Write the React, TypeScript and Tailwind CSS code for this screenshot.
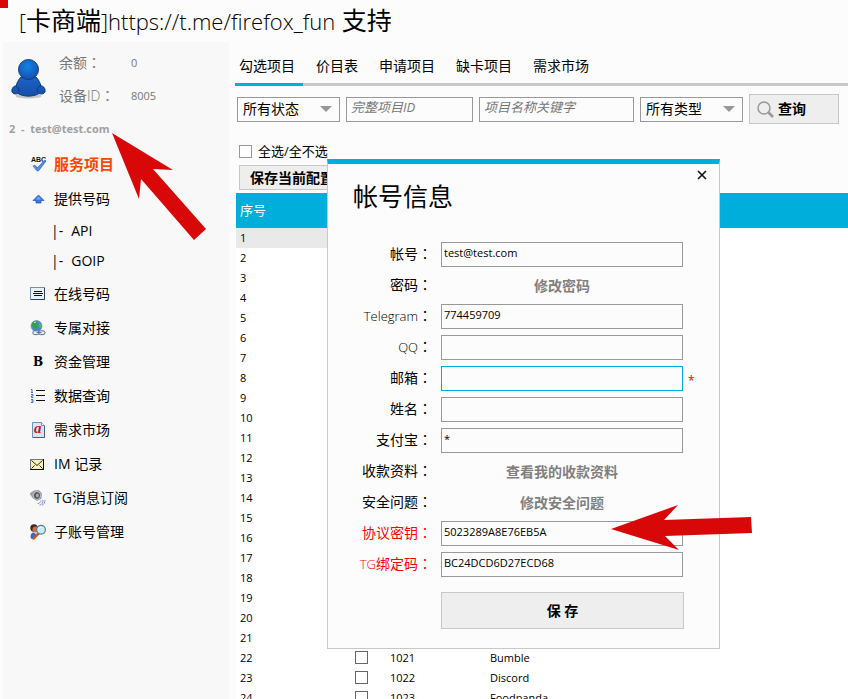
import React, { useState } from "react";
import clsx from "clsx";

interface MenuEntry {
  label: string;
  icon: React.ReactNode;
  children?: string[];
}

interface Field {
  id: string;
  label: string;
  value?: string;
  link?: string;
  required?: boolean;
  danger?: boolean;
}

const SpellIcon = () => (
  <svg width="18" height="16" viewBox="0 0 18 16" className="-mr-0.5 overflow-visible" aria-hidden="true">
    <text x="1" y="5" fontSize="7" fontFamily="Liberation Sans, sans-serif" fill="#111">ABC</text>
    <path d="M3 9l2-.8 2.500 2.600L14 3.500l2 .7L8.500 14H7Z" fill="#5a8ade" stroke="#3562b8" strokeWidth=".6" />
  </svg>
);

const UpIcon = () => (
  <svg width="16" height="16" viewBox="0 0 16 16" aria-hidden="true">
    <path d="M8.500 4 14 9.500h-3V12H6V9.500H3Z" fill="#3f78e0" stroke="#2a5cc4" strokeWidth=".8" />
    <path d="M8.500 5.500 11 8.500H6Z" fill="#7aa8f4" />
  </svg>
);

const NoteIcon = () => (
  <svg width="16" height="16" viewBox="0 0 16 16" aria-hidden="true">
    <rect x=".5" y="1.500" width="14" height="12" fill="#e9f0fa" stroke="#7890b0" />
    <path d="M1 13.500h13.500V2" fill="none" stroke="#2b4468" />
    <path d="M4 5.500h8M3 7.500h10M4 9.500h8" stroke="#111" />
  </svg>
);

const GlobeIcon = () => (
  <svg width="16" height="16" viewBox="0 0 16 16" aria-hidden="true">
    <circle cx="6.500" cy="6" r="5.500" fill="#4a86d8" stroke="#6c8fb8" strokeWidth=".7" />
    <path d="M2 3c2-2 4-2 5-1.500L6 4l2 1-1 3-2 2-1-3-2-1Z" fill="#35a53a" />
    <path d="m9 2 2 2v4L9 7Z" fill="#4fbe48" />
    <path d="M4 2.500 6 2" stroke="#c4efb0" />
    <rect x="2.800" y="10.800" width="6.500" height="3.800" rx="1.900" fill="#e8eef6" stroke="#56708f" />
    <rect x="8.500" y="10.800" width="6.500" height="3.800" rx="1.900" fill="#e8eef6" stroke="#56708f" />
    <path d="M6.500 12.600h5" stroke="#56708f" />
  </svg>
);

const BoldIcon = () => (
  <span className="block w-4 text-center font-['DejaVu_Serif',serif] text-xs font-bold">B</span>
);

const ListIcon = () => (
  <svg width="16" height="16" viewBox="0 0 16 16" aria-hidden="true">
    <path d="M1 1.500h1V5M1 4.500h2M1 6.500h2V8H1.500v1.500h2M1 11.500h2v3H1M1.500 13h1.500" fill="none" stroke="#4a6fc0" />
    <path d="M6 2.500h9M6 7.500h9M6 12.500h9" stroke="#111" />
  </svg>
);

const LetterIcon = () => (
  <svg width="16" height="16" viewBox="0 0 16 16" aria-hidden="true">
    <path d="M2.500.5h9l3 3v12h-12Z" fill="#d7e6fa" stroke="#6f8fc0" />
    <path d="M11.500.5v3h3" fill="#fff" stroke="#6f8fc0" />
    <path d="M3 15.500h11.500V4" fill="none" stroke="#3d5f96" />
    <text x="4" y="11" fontSize="15" fontStyle="italic" fontWeight="700" fontFamily="Liberation Serif, serif" fill="#c8141c">a</text>
  </svg>
);

const MailIcon = () => (
  <svg width="16" height="16" viewBox="0 0 16 16" aria-hidden="true">
    <rect x=".5" y="3.500" width="13" height="10" fill="#f3f0b8" stroke="#777" />
    <path d="M0 13.500h14M13.500 3v10.500" stroke="#111" />
    <path d="m1.500 4.500 5.500 5 5.500-5M1.500 12.500l3-3M12.500 12.500l-3-3" fill="none" stroke="#222" />
  </svg>
);

const SpeakerIcon = () => (
  <svg width="16" height="16" viewBox="0 0 16 16" aria-hidden="true">
    <path d="M0 3.500 4 1l5-.5 2.500 3-.5 5L7 10.500 3 8Z" fill="#a4a7ad" stroke="#777b82" strokeWidth=".6" />
    <ellipse cx="7" cy="5.500" rx="3.600" ry="4" fill="#4f5258" stroke="#c9ccd2" />
    <ellipse cx="7.300" cy="5.500" rx="1.500" ry="2" fill="#a9adb4" />
    <path d="M7.500 13.500c2 0 3.500-1.500 3.500-3M9.500 15c2.500 0 3.500-2.500 3.500-5M12 15.500c2-1 3-3 3-5.500" fill="none" stroke="#8c8cdc" />
  </svg>
);

const AccountIcon = () => (
  <svg width="16" height="16" viewBox="0 0 16 16" aria-hidden="true">
    <circle cx="4" cy="4" r="3.700" fill="#3a2c28" />
    <circle cx="5.500" cy="5.500" r="3" fill="#e0692c" />
    <path d="M.5 13c0-3 1-4.500 3.500-4.500L7 11l-3 4H1.500Z" fill="#3865d0" />
    <path d="m8.500 9.500-5 5" stroke="#b5622c" strokeWidth="2.500" strokeLinecap="round" />
    <circle cx="11" cy="5.800" r="4.400" fill="#c8ecfc" stroke="#5f7b96" strokeWidth="1.200" />
    <path d="M8.500 5.500c.5-1.500 1.500-2 3-2" fill="none" stroke="#fff" />
  </svg>
);

const Avatar = () => (
  <svg width="36" height="42" viewBox="0 0 36 42" aria-hidden="true">
    <defs>
      <radialGradient id="head" cx=".45" cy=".35" r=".65">
        <stop offset="0" stopColor="#1184e8" />
        <stop offset="1" stopColor="#1650ad" />
      </radialGradient>
      <linearGradient id="torso" x1="0" y1="0" x2="0" y2="1">
        <stop offset="0" stopColor="#1b62c4" />
        <stop offset="1" stopColor="#164fa8" />
      </linearGradient>
    </defs>
    <ellipse cx="17.500" cy="38" rx="13" ry="2.500" fill="#000" opacity=".2" />
    <path
      d="M10 19C7 22 6 25 5 28c-3 0-4.500 3-4 6 1 2 4 2.500 6 1.500 6 3.500 15 3.500 21 0 2 1 5 .5 6-1.500 .5-3-1-6-4-6-1-3-2-6-5-9Z"
      fill="url(#torso)"
      stroke="#123a7c"
    />
    <path d="M5 28c2 1 3 3 3 6M30 28c-3 0-5 3-3 6" fill="none" stroke="#103777" />
    <circle cx="17.500" cy="11.500" r="10" fill="url(#head)" stroke="#123a7c" />
  </svg>
);

const menu: MenuEntry[] = [
  { label: "服务项目", icon: <SpellIcon /> },
  { label: "提供号码", icon: <UpIcon />, children: ["API", "GOIP"] },
  { label: "在线号码", icon: <NoteIcon /> },
  { label: "专属对接", icon: <GlobeIcon /> },
  { label: "资金管理", icon: <BoldIcon /> },
  { label: "数据查询", icon: <ListIcon /> },
  { label: "需求市场", icon: <LetterIcon /> },
  { label: "IM 记录", icon: <MailIcon /> },
  { label: "TG消息订阅", icon: <SpeakerIcon /> },
  { label: "子账号管理", icon: <AccountIcon /> },
];

const tabs = ["勾选项目", "价目表", "申请项目", "缺卡项目", "需求市场"];

const fields: Field[] = [
  { id: "account", label: "帐号", value: "test@test.com" },
  { id: "password", label: "密码", link: "修改密码" },
  { id: "telegram", label: "Telegram", value: "774459709" },
  { id: "qq", label: "QQ", value: "" },
  { id: "email", label: "邮箱", value: "", required: true },
  { id: "name", label: "姓名", value: "" },
  { id: "alipay", label: "支付宝", value: "*" },
  { id: "payment", label: "收款资料", link: "查看我的收款资料" },
  { id: "question", label: "安全问题", link: "修改安全问题" },
  { id: "secret", label: "协议密钥", value: "5023289A8E76EB5A", danger: true },
  { id: "tgcode", label: "TG绑定码", value: "BC24DCD6D27ECD68", danger: true },
];

const projects: Record<number, { id: string; name: string }> = {
  22: { id: "1021", name: "Bumble" },
  23: { id: "1022", name: "Discord" },
  24: { id: "1023", name: "Foodpanda" },
};

const rows = Array.from({ length: 24 }, (_, i) => i + 1);

// The Traditional Chinese face centres the full-width colon in its cell
const Colon = () => <span className="font-['Noto_Sans_CJK_TC',sans-serif]">：</span>;

// Sets the Latin runs of a mixed label in the light, slightly smaller face
const Mixed = ({ text, latinClass }: { text: string; latinClass: string }) => (
  <>
    {text.split(/([\x21-\x7e]+)/).map((part, i) =>
      i % 2 ? <span key={i} className={latinClass}>{part}</span> : part
    )}
  </>
);

const Select = ({ label }: { label: string }) => (
  <div className="relative w-[103px]">
    <select
      aria-label={label}
      className="h-[25px] w-full appearance-none border border-[#999] bg-transparent pl-[5px] text-sm leading-5"
    >
      <option>{label}</option>
    </select>
    <svg className="pointer-events-none absolute top-2.5 right-2" width="12" height="6" viewBox="0 0 12 6">
      <path d="M0 0h12L6 6Z" fill="#999" />
    </svg>
  </div>
);

const Sidebar = () => (
  <aside className="ml-[3px] w-[226px] shrink-0 bg-[#f8f8f8] text-sm">
    <div className="flex items-center gap-3 pt-1 pl-2 text-[#777]">
      <Avatar />
      <dl className="grid grid-cols-[72px_1fr] items-center leading-[33px]">
        <dt>余额<Colon /></dt>
        <dd className="text-[11px] leading-[33px]">0</dd>
        <dt>
          <Mixed text="设备ID" latinClass="font-light" />
          <Colon />
        </dt>
        <dd className="text-[11px] leading-[33px]">8005</dd>
      </dl>
    </div>
    <p className="mt-[9px] pl-1.5 text-[11px] leading-4 font-bold whitespace-pre text-[#a0a0a0]">2  -  test@test.com</p>
    <nav className="mt-[11px] pl-[27px]">
      <ul>
        {menu.map((item, i) => (
          <li key={item.label}>
            <a
              href="#"
              className={clsx("flex h-[34px] items-center gap-2", i === 0 && "text-[15px] font-bold text-[#ff4500]")}
            >
              {item.icon}
              {item.label}
            </a>
            {item.children && (
              <ul className="pb-px pl-[21px]">
                {item.children.map((child) => (
                  <li key={child}>
                    <a href="#" className="flex h-[30px] items-center gap-2">
                      <span>|-</span>
                      {child}
                    </a>
                  </li>
                ))}
              </ul>
            )}
          </li>
        ))}
      </ul>
    </nav>
  </aside>
);

const ProjectTable = () => (
  <table className="ml-px w-full table-fixed border-collapse bg-white text-left text-[11px]">
    <colgroup>
      <col className="w-[119px]" />
      <col className="w-[31px]" />
      <col className="w-[100px]" />
      <col />
    </colgroup>
    <thead>
      <tr className="h-[35px] bg-[#00aedb] text-[13px] text-white">
        <th className="pl-1 font-normal">序号</th>
        <th />
        <th />
        <th />
      </tr>
    </thead>
    <tbody>
      {rows.map((n) => (
        <tr key={n} className="h-5">
          <td className={clsx("pl-1", n === 1 && "bg-[#e9e9e9]")}>{n}</td>
          <td className="pb-px">
            {projects[n] && (
              <input
                type="checkbox"
                aria-label={projects[n].name}
                className="block size-[13px] appearance-none border border-[#666] bg-white"
              />
            )}
          </td>
          <td className="pl-1">{projects[n]?.id}</td>
          <td className="pl-1">{projects[n]?.name}</td>
        </tr>
      ))}
    </tbody>
  </table>
);

const AccountDialog = () => {
  const [values, setValues] = useState<Record<string, string>>(
    Object.fromEntries(fields.map((f) => [f.id, f.value ?? ""]))
  );

  return (
    <section
      role="dialog"
      aria-labelledby="dialog-title"
      className="absolute top-[159px] left-[327px] w-[393px] border border-t-[5px] border-[#c8c8c8] border-t-[#00aedb] bg-[#fcfcfc] pb-[19px]"
    >
      <header className="flex items-start justify-between pl-[25px]">
        <h2 id="dialog-title" className="pt-4 text-[25px] leading-8">帐号信息</h2>
        <button aria-label="关闭" className="p-3 pt-1.5">
          <svg width="10" height="10" viewBox="0 0 10 10">
            <path d="m1 1 8 8M9 1 1 9" stroke="#111" strokeWidth="1.600" />
          </svg>
        </button>
      </header>
      <form className="mt-[30px] flex flex-col gap-1.5 text-sm" onSubmit={(e) => e.preventDefault()}>
        {fields.map((field) => (
          <div key={field.id} className="flex h-[25px] items-center">
            <label
              htmlFor={field.id}
              className={clsx("mr-[9px] w-[104px] pb-0.5 text-right", field.danger && "text-[#ff0000]")}
            >
              <Mixed text={field.label} latinClass="text-[13px] font-light" />
              <Colon />
            </label>
            {field.link ? (
              <button id={field.id} type="button" className="w-[242px] font-bold text-[#808080]">
                {field.link}
              </button>
            ) : (
              <input
                id={field.id}
                value={values[field.id]}
                onChange={(e) => setValues({ ...values, [field.id]: e.target.value })}
                className={clsx(
                  "h-[25px] w-[242px] border bg-transparent px-0.5 pb-1 text-[11px] outline-none",
                  field.required ? "border-[#00aedb]" : "border-[#999]"
                )}
              />
            )}
            {field.required && <span className="pt-1 pl-[5px] text-xs text-[#ff0000]">*</span>}
          </div>
        ))}
        <button className="mt-[9px] ml-[113px] h-[37px] w-[243px] border border-[#c8c8c8] bg-[#eee] font-bold whitespace-pre">
          保 存
        </button>
      </form>
    </section>
  );
};

const App = () => {
  const [activeTab, setActiveTab] = useState(tabs[0]);

  return (
    <div className="relative flex h-screen flex-col overflow-hidden bg-[#fcfcfc] font-['Open_Sans','Noto_Sans_CJK_SC',sans-serif] text-black">
      <div className="absolute top-0 left-0 size-2 bg-[#d90808]" />
      <h1 className="h-[42px] shrink-0 pl-[19px] text-[25px] leading-10 whitespace-nowrap">
        <Mixed text="[卡商端]https://t.me/firefox_fun 支持" latinClass="text-[22px] font-light" />
      </h1>
      <div className="flex min-h-0 flex-1">
        <Sidebar />
        <main className="min-w-0 flex-1 pl-1.5">
          <nav className="flex gap-[9px] border-b-[3px] border-[#c8c8c8] pt-1.5 text-sm">
            {tabs.map((tab) => (
              <button
                key={tab}
                onClick={() => setActiveTab(tab)}
                className={clsx(
                  "-mb-[3px] h-[38px] border-b-[3px] pr-2 pl-1",
                  tab === activeTab ? "border-[#00aedb]" : "border-transparent"
                )}
              >
                {tab}
              </button>
            ))}
          </nav>
          <div className="mt-2 flex items-center gap-1.5 pl-0.5">
            <Select label="所有状态" />
            <input
              aria-label="完整项目ID"
              placeholder="完整项目ID"
              className="h-[25px] w-[127px] border border-[#999] px-1 pb-1 text-[13px] italic placeholder:text-[#777]"
            />
            <input
              aria-label="项目名称关键字"
              placeholder="项目名称关键字"
              className="h-[25px] w-[155px] border border-[#999] px-1 pb-1 text-[13px] italic placeholder:text-[#777]"
            />
            <Select label="所有类型" />
            <button className="flex h-[30px] w-[90px] items-center gap-1 border border-[#c8c8c8] bg-[#eee] pl-[7px] text-sm font-bold">
              <svg width="17" height="17" viewBox="0 0 17 17" fill="none" stroke="#999">
                <circle cx="7" cy="7" r="6" strokeWidth="1.500" />
                <path d="m11.500 11.500 4.500 4.500" strokeWidth="2.500" />
              </svg>
              查询
            </button>
          </div>
          <div className="mt-[17px] flex items-center gap-1.5 pl-1">
            <input
              id="select-all"
              type="checkbox"
              className="size-[13px] appearance-none border border-[#999] bg-white"
            />
            <label htmlFor="select-all" className="text-[13px] leading-5">全选/全不选</label>
          </div>
          <button className="mt-1 mb-[3px] ml-1 block h-[25px] border border-[#c8c8c8] bg-[#eee] px-2.5 text-sm font-bold">
            保存当前配置
          </button>
          <ProjectTable />
        </main>
      </div>
      <AccountDialog />
      <svg className="pointer-events-none absolute top-[133px] left-[112px]" width="95" height="108" viewBox="112 133 95 108">
        <path d="M112 133 173 170 153 169 206 229 194 240 141 179 139 199Z" fill="#d90808" />
      </svg>
      <svg className="pointer-events-none absolute top-[504px] left-[610px]" width="143" height="48" viewBox="611 504 143 48">
        <path d="M612 529 679 505 665 520 752 517 753 533 666 536 680 550Z" fill="#d90808" />
      </svg>
    </div>
  );
};

export default App;
